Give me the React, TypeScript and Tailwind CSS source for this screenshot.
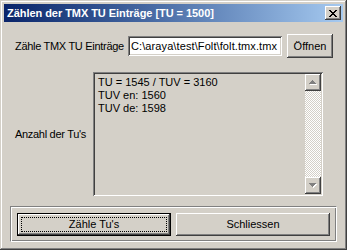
import React from "react";

const raised =
  "shadow-[inset_-1px_-1px_#404040,inset_1px_1px_#ffffff,inset_-2px_-2px_#808080,inset_2px_2px_#d4d0c8]";
const sunken =
  "shadow-[inset_1px_1px_#808080,inset_-1px_-1px_#ffffff,inset_2px_2px_#404040,inset_-2px_-2px_#d4d0c8]";

function PixelGlyph({ rows, color, dx = 0, dy = 0 }: { rows: string[]; color: string; dx?: number; dy?: number }) {
  const rects: React.ReactElement[] = [];
  rows.forEach((row, y) => {
    row.split("").forEach((c, x) => {
      if (c === "#") rects.push(<rect key={`${x}-${y}`} x={x + dx} y={y + dy} width={1} height={1} fill={color} />);
    });
  });
  return <>{rects}</>;
}

const CLOSE = ["##....##", ".##..##.", "..####..", "...##...", "..####..", ".##..##.", "##....##"];
const UP = ["...#...", "..###..", ".#####.", "#######"];
const DOWN = ["#######", ".#####.", "..###..", "...#..."];

function ArrowButton({ rows }: { rows: string[] }) {
  return (
    <div className={`w-[16px] h-[17px] bg-[#d4d0c8] flex items-center justify-center ${raised}`}>
      <svg width="8" height="5" shapeRendering="crispEdges">
        <PixelGlyph rows={rows} color="#ffffff" dx={1} dy={1} />
        <PixelGlyph rows={rows} color="#808080" />
      </svg>
    </div>
  );
}

export default function App() {
  return (
    <div className="w-[347px] h-[250px] bg-[#d4d0c8] p-[4px] flex flex-col text-[11px] text-black font-[family-name:'Liberation_Sans','DejaVu_Sans',sans-serif] shadow-[inset_-1px_-1px_#404040,inset_1px_1px_#d4d0c8,inset_-2px_-2px_#808080,inset_2px_2px_#ffffff]">
      {/* title bar */}
      <div className="h-[18px] flex items-center bg-gradient-to-r from-[#0a246a] to-[#a6caf0] pl-[3px] pr-[2px]">
        <span className="font-bold text-white text-[11px] tracking-[-0.05px] leading-none whitespace-nowrap">
          Zählen der TMX TU Einträge [TU = 1500]
        </span>
        <div className={`ml-auto w-[16px] h-[14px] bg-[#d4d0c8] flex items-center justify-center ${raised}`}>
          <svg width="8" height="7" shapeRendering="crispEdges">
            <PixelGlyph rows={CLOSE} color="#000000" />
          </svg>
        </div>
      </div>

      {/* file row */}
      <div className="mt-[12px] pl-[11px] flex items-center">
        <span className="w-[113px] shrink-0 whitespace-nowrap tracking-[-0.3px]">Zähle TMX TU Einträge</span>
        <div className={`w-[154px] h-[20px] bg-white pl-[3px] pr-[1px] flex items-center overflow-hidden whitespace-nowrap text-[11px] tracking-[0.1px] ${sunken}`}>
          C:\araya\test\Folt\folt.tmx.tmx
        </div>
        <button className={`ml-[5px] w-[46px] h-[24px] bg-[#d4d0c8] flex items-center justify-center ${raised}`}>
          Öffnen
        </button>
      </div>

      {/* result row */}
      <div className="mt-[14px] pl-[11px] flex items-center">
        <span className="w-[78px] shrink-0 whitespace-nowrap tracking-[-0.3px]">Anzahl der Tu's</span>
        <div className={`w-[230px] h-[124px] p-[2px] flex ${sunken}`}>
          <div className="flex-1 pl-[3px] pt-[2px] leading-[13px]">
            <div>TU = 1545 / TUV = 3160</div>
            <div>TUV en: 1560</div>
            <div>TUV de: 1598</div>
          </div>
          <div className="w-[16px] flex flex-col">
            <ArrowButton rows={UP} />
            <div className="flex-1 bg-[image:repeating-conic-gradient(#ffffff_0%_25%,#d4d0c8_0%_50%)] bg-[length:2px_2px]" />
            <ArrowButton rows={DOWN} />
          </div>
        </div>
      </div>

      {/* button group */}
      <div className="mt-[10px] mx-[6px] h-[36px] border border-t-[#808080] border-l-[#808080] border-b-white border-r-white shadow-[inset_1px_1px_#ffffff,inset_-1px_-1px_#808080] flex gap-[5px] pl-[6px] pr-[6px] pt-[6px]">
        <button className={`w-[154px] h-[23px] bg-[#d4d0c8] border border-black p-[3px] flex ${raised}`}>
          <span className="flex-1 border border-dotted border-black flex items-center justify-center">Zähle Tu's</span>
        </button>
        <button className={`w-[154px] h-[23px] bg-[#d4d0c8] flex items-center justify-center ${raised}`}>
          Schliessen
        </button>
      </div>
    </div>
  );
}
